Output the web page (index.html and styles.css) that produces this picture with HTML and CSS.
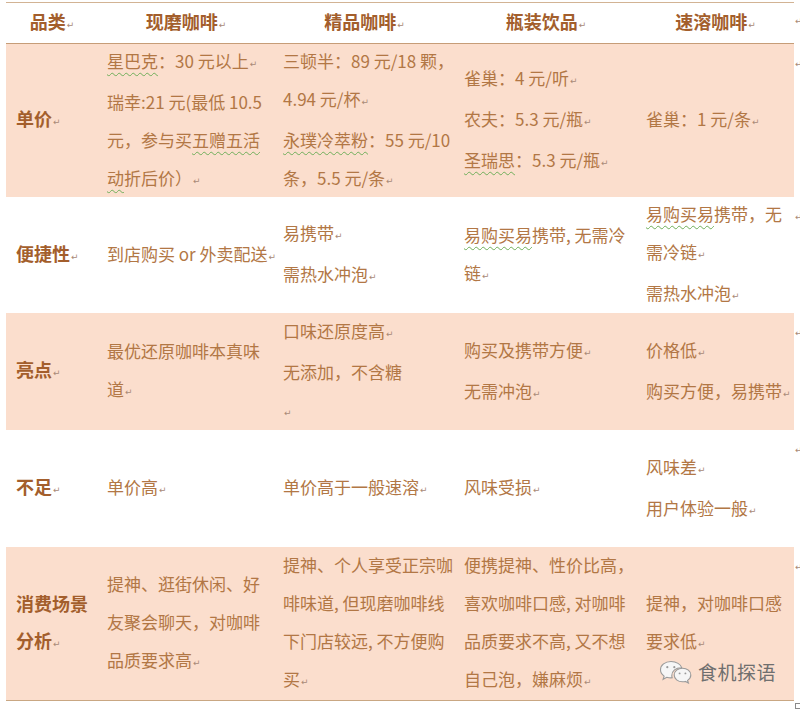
FILE: index.html
```html
<!DOCTYPE html>
<html lang="zh-CN">
<head>
<meta charset="utf-8">
<title>咖啡品类对比</title>
<link rel="stylesheet" href="styles.css">
</head>
<body>
<div class="sheet">
  <div class="grid">
    <div class="c h"><p>品类<span class="pm">↵</span></p></div>
    <div class="c h"><p>现磨咖啡<span class="pm">↵</span></p></div>
    <div class="c h"><p>精品咖啡<span class="pm">↵</span></p></div>
    <div class="c h"><p>瓶装饮品<span class="pm">↵</span></p></div>
    <div class="c h"><p>速溶咖啡<span class="pm">↵</span></p></div>
    <div class="c end first"><span class="pm">↵</span></div>

    <div class="c lab pink"><p>单价<span class="pm">↵</span></p></div>
    <div class="c pink"><p><span class="sp">星巴克</span>：30 元以上<span class="pm">↵</span><br>瑞幸:21 元(最低 10.5<br>元，参与买<span class="sp">五赠五活</span><br><span class="sp">动</span>折后价）<span class="pm">↵</span></p></div>
    <div class="c pink"><p>三顿半：89 元/18 颗，<br>4.94 元/杯<span class="pm">↵</span><br><span class="sp">永璞冷萃粉</span>：55 元/10<br>条，5.5 元/条<span class="pm">↵</span></p></div>
    <div class="c pink"><p>雀巢：4 元/听<span class="pm">↵</span><br>农夫：5.3 元/瓶<span class="pm">↵</span><br><span class="sp">圣瑞思</span>：5.3 元/瓶<span class="pm">↵</span></p></div>
    <div class="c pink"><p>雀巢：1 元/条<span class="pm">↵</span></p></div>
    <div class="c end"><span class="pm">↵</span></div>

    <div class="c lab"><p>便捷性<span class="pm">↵</span></p></div>
    <div class="c"><p>到店购买 or 外卖配送<span class="pm">↵</span></p></div>
    <div class="c"><p>易携带<span class="pm">↵</span><br>需热水冲泡<span class="pm">↵</span></p></div>
    <div class="c"><p><span class="sp">易购买易</span>携带, 无需冷<br>链<span class="pm">↵</span></p></div>
    <div class="c"><p><span class="sp">易购买易</span>携带，无<br>需冷链<span class="pm">↵</span><br>需热水冲泡<span class="pm">↵</span></p></div>
    <div class="c end"><span class="pm">↵</span></div>

    <div class="c lab pink"><p>亮点<span class="pm">↵</span></p></div>
    <div class="c pink"><p>最优还原咖啡本真味<br>道<span class="pm">↵</span></p></div>
    <div class="c pink"><p>口味还原度高<span class="pm">↵</span><br>无添加，不含糖<br><span class="pm">↵</span></p></div>
    <div class="c pink"><p>购买及携带方便<span class="pm">↵</span><br>无需冲泡<span class="pm">↵</span></p></div>
    <div class="c pink"><p>价格低<span class="pm">↵</span><br>购买方便，易携带<span class="pm">↵</span></p></div>
    <div class="c end"><span class="pm">↵</span></div>

    <div class="c lab"><p>不足<span class="pm">↵</span></p></div>
    <div class="c"><p>单价高<span class="pm">↵</span></p></div>
    <div class="c"><p>单价高于一般速溶<span class="pm">↵</span></p></div>
    <div class="c"><p>风味受损<span class="pm">↵</span></p></div>
    <div class="c"><p>风味差<span class="pm">↵</span><br>用户体验一般<span class="pm">↵</span></p></div>
    <div class="c end"><span class="pm">↵</span></div>

    <div class="c lab pink last"><p>消费场景<br>分析<span class="pm">↵</span></p></div>
    <div class="c pink last"><p>提神、逛街休闲、好<br>友聚会聊天，对咖啡<br>品质要求高<span class="pm">↵</span></p></div>
    <div class="c pink last"><p>提神、个人享受正宗咖<br>啡味道, 但现磨咖啡线<br>下门店较远, 不方便购<br>买<span class="pm">↵</span></p></div>
    <div class="c pink last"><p>便携提神、性价比高，<br>喜欢咖啡口感, 对咖啡<br>品质要求不高, 又不想<br>自己泡，嫌麻烦<span class="pm">↵</span></p></div>
    <div class="c pink last"><p>提神，对咖啡口感<br>要求低<span class="pm">↵</span></p></div>
    <div class="c end"><span class="pm">↵</span><span class="handle"></span></div>
  </div>

  <div class="wm">
    <svg class="wm-icon" width="34" height="24" viewBox="0 0 34 24" aria-hidden="true">
      <path d="M12 1.5C6 1.5 1.5 5.2 1.5 9.8c0 2.6 1.4 4.8 3.6 6.3l-1 3.2 3.7-2c1.3.4 2.7.6 4.2.6.4 0 .8 0 1.2-.1-.3-.8-.4-1.6-.4-2.4 0-4.3 4.1-7.7 9.2-7.7h.7C21.8 4.4 17.4 1.5 12 1.5z" fill="#f6f6f6" stroke="#9a9a9a" stroke-width="1.1"/>
      <circle cx="8.3" cy="7.2" r="1.1" fill="#9a9a9a"/>
      <circle cx="15.3" cy="7.2" r="1.1" fill="#9a9a9a"/>
      <path d="M23.5 8.2c-4.6 0-8.3 3-8.3 6.8s3.7 6.8 8.3 6.8c1 0 2-.1 2.9-.4l3 1.6-.8-2.6c1.9-1.3 3.2-3.2 3.2-5.4 0-3.8-3.7-6.8-8.3-6.8z" fill="#f6f6f6" stroke="#9a9a9a" stroke-width="1.1"/>
      <circle cx="20.6" cy="13.4" r="0.95" fill="#9a9a9a"/>
      <circle cx="26.4" cy="13.4" r="0.95" fill="#9a9a9a"/>
    </svg>
    <span class="wm-text">食机探语</span>
  </div>
</div>
</body>
</html>
```

FILE: styles.css
```css
html, body {
  margin: 0;
  padding: 0;
  background: #ffffff;
}

body {
  font-family: "Noto Sans CJK SC", "Noto Sans", sans-serif;
  color: #b27745;
}

.sheet {
  position: relative;
  width: 800px;
  height: 709px;
  padding-top: 2px;
  padding-left: 6px;
  box-sizing: border-box;
}

.grid {
  display: grid;
  grid-template-columns: 92px 176px 181px 182px 157px 6px;
  grid-template-rows: 42px 153px 116px 117px 117px 154px;
}

.c {
  display: flex;
  flex-direction: column;
  justify-content: center;
  padding-left: 9px;
  box-sizing: border-box;
  font-size: 17px;
  line-height: 38px;
  white-space: nowrap;
  min-width: 0;
}

.c p {
  margin: 0;
}

.pink {
  background: #fbdecd;
}

.h {
  align-items: center;
  padding-left: 0;
  font-size: 18px;
  font-weight: 700;
  color: #a35e2c;
  line-height: 24px;
  border-top: 1px solid #d2b394;
  border-bottom: 1px solid #c69d78;
}

.lab {
  padding-left: 10px;
  font-size: 18px;
  font-weight: 700;
  color: #a35e2c;
  line-height: 37px;
}

.last {
  border-bottom: 1px solid #c9a783;
}

.end {
  justify-content: flex-start;
  line-height: 12px;
  padding: 14px 0 0 1px;
  position: relative;
}

.end.first {
  padding-top: 13px;
}

.pm {
  font-family: "DejaVu Sans", sans-serif;
  font-size: 9px;
  font-weight: 400;
  color: #a98a76;
  margin-left: 1px;
  vertical-align: 1px;
}

.end .pm {
  margin-left: 0;
}

.sp {
  text-decoration: underline wavy #6fae5a;
  text-decoration-thickness: 1px;
  text-underline-offset: 4px;
  text-decoration-skip-ink: none;
}

.handle {
  position: absolute;
  left: 1px;
  bottom: -8px;
  width: 4px;
  height: 4px;
  border: 1px solid #8a8a8a;
  background: #ffffff;
}

.wm {
  position: absolute;
  left: 659px;
  top: 660px;
  display: flex;
  align-items: center;
  gap: 5px;
}

.wm-icon {
  display: block;
}

.wm-text {
  font-family: "Noto Sans CJK SC", sans-serif;
  font-size: 19px;
  color: #6f6f6f;
  letter-spacing: 0.5px;
  line-height: 24px;
}
```
